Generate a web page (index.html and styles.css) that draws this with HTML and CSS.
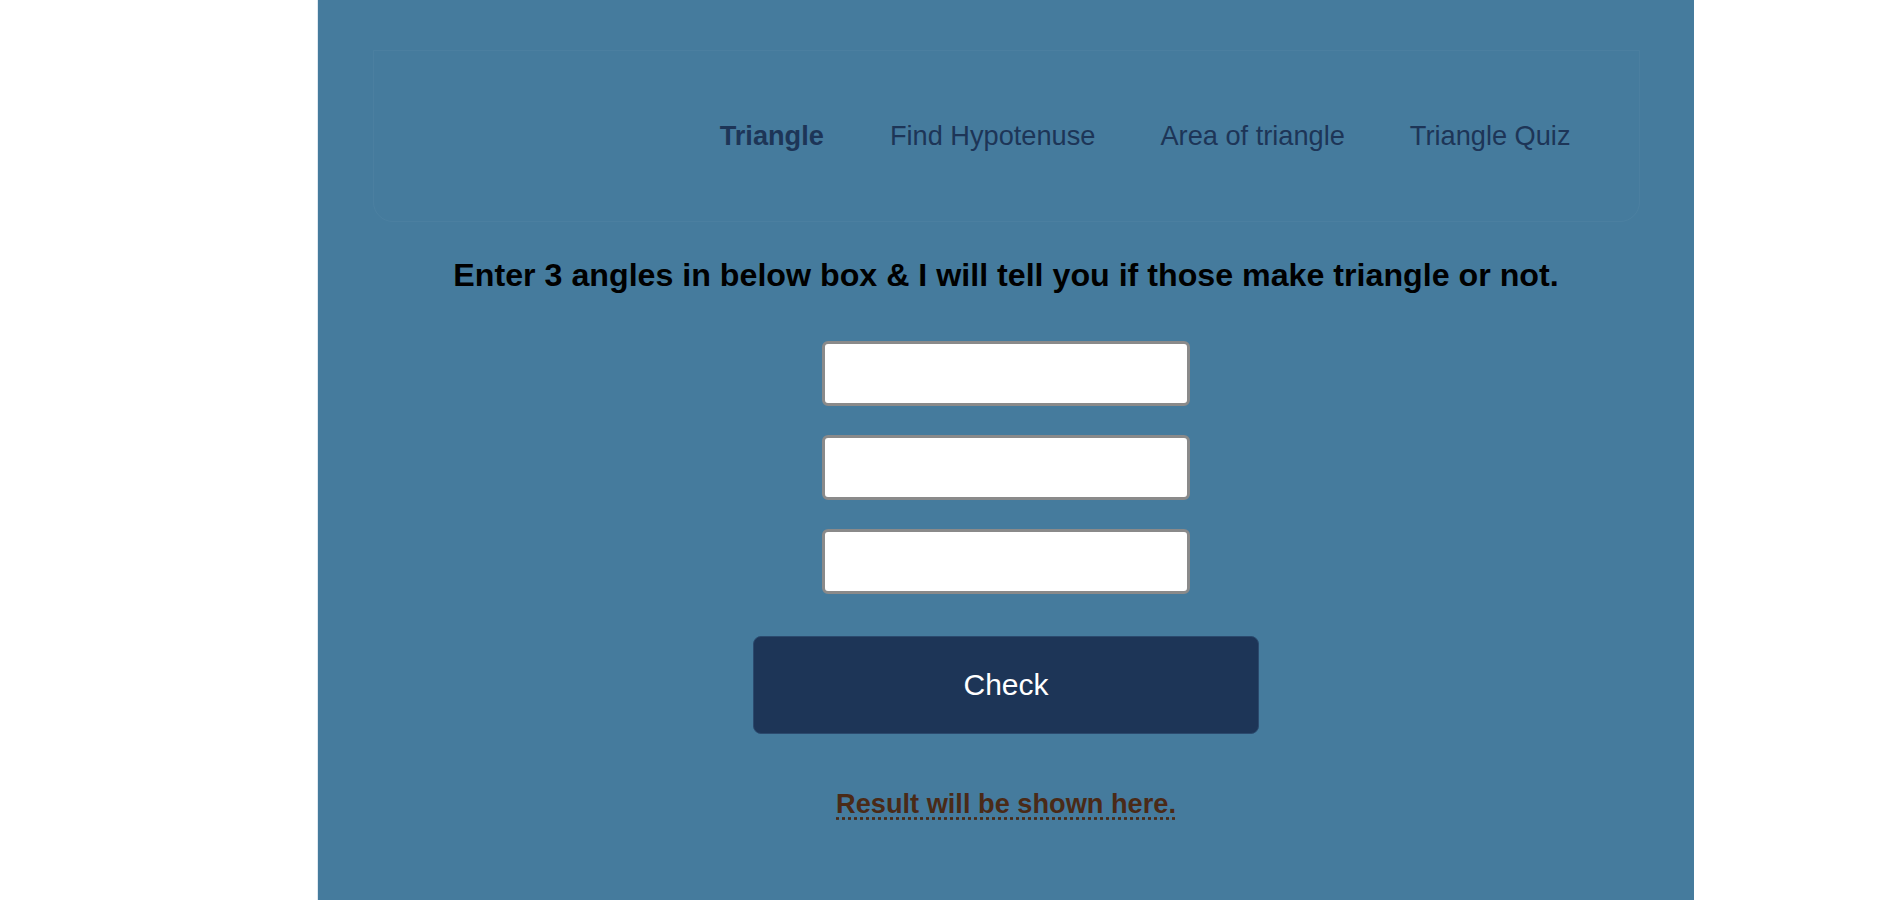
FILE: index.html
```html
<!DOCTYPE html>
<html lang="en">
<head>
<meta charset="utf-8">
<title>Triangle</title>
<link rel="stylesheet" href="styles.css">
</head>
<body>
<main class="panel">
  <header class="navbox">
    <nav class="nav">
      <a class="nav-link active" href="#">Triangle</a>
      <a class="nav-link" href="#">Find Hypotenuse</a>
      <a class="nav-link" href="#">Area of triangle</a>
      <a class="nav-link" href="#">Triangle Quiz</a>
    </nav>
  </header>
  <h1 class="title">Enter 3 angles in below box &amp; I will tell you if those make triangle or not.</h1>
  <div class="inputs">
    <input class="angle" type="number">
    <input class="angle" type="number">
    <input class="angle" type="number">
  </div>
  <button class="check" type="button">Check</button>
  <p class="result">Result will be shown here.</p>
</main>
</body>
</html>
```
FILE: styles.css
```css
html, body {
  margin: 0;
  padding: 0;
  background: #ffffff;
}
body {
  font-family: "Liberation Sans", Arial, sans-serif;
}
.panel {
  margin-left: 318px;
  width: 1376px;
  min-height: 900px;
  background: #457b9d;
  box-shadow: -1px 0 0 #dfe8f0;
  padding: 50px 0 60px;
  box-sizing: border-box;
  display: flex;
  flex-direction: column;
  align-items: center;
}
.navbox {
  width: 1267px;
  height: 172px;
  box-sizing: border-box;
  border: 1px solid rgba(255, 255, 255, 0.035);
  border-radius: 0 0 20px 20px;
  display: flex;
  align-items: center;
  justify-content: flex-end;
  padding-right: 68px;
}
.nav {
  display: flex;
  gap: 65px;
  align-items: center;
}
.nav-link {
  color: #1d3557;
  text-decoration: none;
  font-size: 27.2px;
}
.nav-link.active {
  font-weight: bold;
  margin-right: 1px;
}
.title {
  margin: 35px 0 0;
  font-size: 32.2px;
  font-weight: bold;
  color: #000;
  text-align: center;
  line-height: 37px;
}
.inputs {
  margin-top: 47px;
  display: flex;
  flex-direction: column;
  gap: 29px;
}
.angle {
  width: 368px;
  height: 65px;
  box-sizing: border-box;
  border: 3px solid #8a8a8a;
  border-radius: 6px;
  background: #fff;
  margin: 0;
  padding: 0 10px;
  font-size: 20px;
}
.check {
  margin-top: 42px;
  width: 506px;
  height: 98px;
  background: #1d3557;
  color: #fff;
  border: 1px solid #2b4a6e;
  border-radius: 8px;
  font-family: "Liberation Sans", Arial, sans-serif;
  font-size: 30px;
}
.result {
  margin: 54px 0 0;
  font-size: 27.2px;
  font-weight: bold;
  color: #4a2a17;
  text-decoration: underline dotted;
  text-underline-offset: 4px;
  line-height: 31px;
}
```
